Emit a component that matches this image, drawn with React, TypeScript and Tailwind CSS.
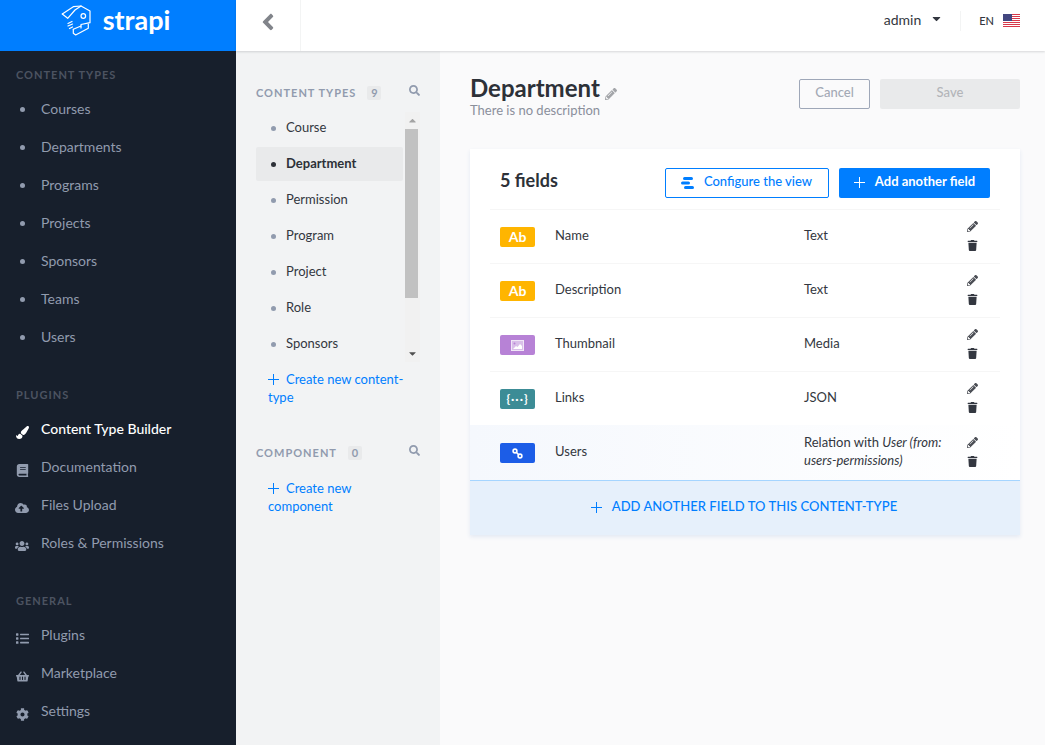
import type { ReactNode } from 'react';
import {
  FaAngleLeft,
  FaBook,
  FaCaretDown,
  FaCaretUp,
  FaCloudUploadAlt,
  FaCog,
  FaList,
  FaPaintBrush,
  FaPencilAlt,
  FaSearch,
  FaShoppingBasket,
  FaTrash,
  FaUsers,
} from 'react-icons/fa';

const contentTypes = ['Courses', 'Departments', 'Programs', 'Projects', 'Sponsors', 'Teams', 'Users'];
const subItems = ['Course', 'Department', 'Permission', 'Program', 'Project', 'Role', 'Sponsors'];

function Logo() {
  return (
    <svg width="32" height="33" viewBox="0 0 32 33" fill="none" stroke="white" strokeWidth="1.2" strokeLinejoin="round" strokeLinecap="round" className="mt-px">
      <path d="M2.3 10 L13.3 2.7 L21 2 L30 7 V18.7 L21 20.5 V24" />
      <path d="M2.3 10 L7.7 14.3 L15 6 L21 2" />
      <path d="M13.3 25.3 V29.3 L15.7 31 L28.3 24.3 V20" />
      <path d="M13.3 25.3 L21 22" />
      <circle cx="23.3" cy="12" r="2.3" />
      <path d="M8 19.5 L12 17.5 M8 22 L12.5 20 M9.5 24.5 L12.5 23" />
    </svg>
  );
}

function NavTitle({ children }: { children: ReactNode }) {
  return (
    <div className="mt-[31px] mb-[7px] pl-4 text-[11px] leading-4 font-bold tracking-[1px] text-[#4c5361] first:mt-4">
      {children}
    </div>
  );
}

function NavItem({ icon, label, active }: { icon: ReactNode; label: string; active?: boolean }) {
  return (
    <div className={`flex h-[38px] items-center text-sm ${active ? 'text-white' : 'text-[#919bae]'}`}>
      <span className="flex w-[41px] shrink-0 justify-center pt-[6px] pl-[3px] text-[13px]">{icon}</span>
      <span className={active ? 'font-medium' : ''}>{label}</span>
    </div>
  );
}

function Dot({ className }: { className: string }) {
  return <span className={`block h-[5px] w-[5px] rounded-full ${className}`} />;
}

function CountTitle({ label, count }: { label: string; count: number }) {
  return (
    <div className="flex h-4 items-center pr-5 pl-5 text-[11px] font-bold tracking-[1px] text-[#919bae]">
      <span>{label}</span>
      <span className="ml-[11px] flex h-[14px] w-[14px] items-center justify-center rounded-[2px] bg-[#e9eaeb] tracking-normal">
        {count}
      </span>
      <FaSearch className="ml-auto -mt-[5px] text-[11px]" />
    </div>
  );
}

function CreateLink({ children }: { children: string }) {
  return (
    <div className="w-[172px] pl-8 text-[13px] leading-[18px] text-[#007eff]">
      <svg width="11" height="11" viewBox="0 0 11 11" className="mr-[7px] mb-[2px] inline-block" stroke="#007eff" strokeWidth="1">
        <path d="M5.5 0 V11 M0 5.5 H11" />
      </svg>
      {children}
    </div>
  );
}

function Badge({ className, children }: { className: string; children: ReactNode }) {
  return (
    <span className={`mt-px flex h-5 w-[35px] shrink-0 items-center justify-center rounded-[2px] text-sm font-bold text-white ${className}`}>
      {children}
    </span>
  );
}

function FieldRow({ badge, name, type, last }: { badge: ReactNode; name: string; type: ReactNode; last?: boolean }) {
  return (
    <div className={`flex items-center ${last ? 'h-[55px] bg-gradient-to-r from-[#f5f8fd] to-white px-[30px]' : 'mx-5 h-[54px] border-t border-[#f6f6f6] px-[10px]'}`}>
      {badge}
      <span className="ml-5 w-[249px] shrink-0 pb-[2px] text-[13px] text-[#333740]">{name}</span>
      <span className="w-[150px] shrink-0 pb-1 text-[13px] leading-[18px] text-[#333740]">{type}</span>
      <span className="ml-[11px] flex w-[14px] flex-col items-center gap-2 pb-[2px] text-[11px] text-[#333740]">
        <FaPencilAlt className="text-[#4b4e55]" />
        <FaTrash />
      </span>
    </div>
  );
}

export default function App() {
  return (
    <div className="flex h-[745px] w-[1045px] overflow-hidden bg-[#fafafb] font-['Lato','Liberation_Sans',sans-serif]">
      <aside className="flex w-[236px] shrink-0 flex-col bg-[#171f2c]">
        <div className="flex h-[51px] shrink-0 items-center justify-center gap-[11px] bg-[#007eff] pr-[6px] pb-[11px]">
          <Logo />
          <span className="mb-[2px] text-[27px] leading-none font-bold text-white">strapi</span>
        </div>
        <div>
          <NavTitle>CONTENT TYPES</NavTitle>
          {contentTypes.map((name) => (
            <NavItem key={name} icon={<Dot className="mb-[5px] bg-[#919bae]" />} label={name} />
          ))}
          <NavTitle>PLUGINS</NavTitle>
          <NavItem active icon={<FaPaintBrush />} label="Content Type Builder" />
          <NavItem icon={<FaBook />} label="Documentation" />
          <NavItem icon={<FaCloudUploadAlt className="text-[14px]" />} label="Files Upload" />
          <NavItem icon={<FaUsers className="text-[14px]" />} label="Roles &amp; Permissions" />
          <NavTitle>GENERAL</NavTitle>
          <NavItem icon={<FaList />} label="Plugins" />
          <NavItem icon={<FaShoppingBasket />} label="Marketplace" />
          <NavItem icon={<FaCog />} label="Settings" />
        </div>
      </aside>

      <div className="flex min-w-0 flex-1 flex-col">
        <header className="z-10 flex h-[51px] shrink-0 items-center bg-white shadow-[0_1px_2px_rgba(40,42,49,0.16)]">
          <div className="flex h-full w-[65px] items-center justify-center border-r border-[#f3f4f4] pb-2">
            <FaAngleLeft className="text-[26px] text-[#81848a]" />
          </div>
          <div className="ml-auto flex items-center pb-[10px]">
            <span className="pb-[2px] text-sm text-[#333740]">admin</span>
            <FaCaretDown className="ml-[9px] -mt-[4px] text-[13px] text-[#333740]" />
            <span className="mr-[18px] ml-[17px] h-5 w-px bg-[#f3f4f4]" />
            <span className="pt-[2px] text-[11px] font-medium text-[#333740]">EN</span>
            <svg width="17" height="13" viewBox="0 0 17 13" className="mr-[25px] ml-[9px]">
              <rect width="17" height="13" fill="#fff" />
              <path d="M0 0.5H17M0 2.5H17M0 4.5H17M0 6.5H17M0 8.5H17M0 10.5H17M0 12.5H17" stroke="#d8384a" strokeWidth="1" />
              <rect width="9" height="7" fill="#42467f" />
            </svg>
          </div>
        </header>

        <div className="flex min-h-0 flex-1">
          <div className="w-[204px] shrink-0 bg-[#f2f3f4] pt-[34px]">
            <CountTitle label="CONTENT TYPES" count={9} />
            <div className="mt-[9px] flex h-[252px]">
              <div className="ml-5 w-[147px] shrink-0">
                {subItems.map((name) => {
                  const active = name === 'Department';
                  return (
                    <div key={name} className="flex h-9 items-center py-px">
                      <div className={`flex h-full w-full items-center rounded-[2px] pl-[15px] text-[13px] ${active ? 'bg-[#e9eaeb] font-bold text-[#2d3138]' : 'text-[#333740]'}`}>
                        <Dot className={`mr-[10px] ${active ? 'bg-[#2d3138]' : 'bg-[#919bae]'}`} />
                        {name}
                      </div>
                    </div>
                  );
                })}
              </div>
              <div className="mt-[2px] ml-[2px] flex h-[250px] w-[15px] flex-col bg-[#f1f1f1]">
                <div className="flex h-[17px] items-center justify-center">
                  <FaCaretUp className="text-[11px] text-[#a3a3a3]" />
                </div>
                <div className="h-[169px] w-[13px] bg-[#c1c1c1]" />
                <div className="mt-auto flex h-[17px] items-center justify-center">
                  <FaCaretDown className="text-[11px] text-[#505050]" />
                </div>
              </div>
            </div>
            <div className="mt-[8px]">
              <CreateLink>Create new content-type</CreateLink>
            </div>
            <div className="mt-[39px]">
              <CountTitle label="COMPONENT" count={0} />
            </div>
            <div className="mt-[18px]">
              <CreateLink>Create new component</CreateLink>
            </div>
          </div>

          <main className="min-w-0 flex-1 pt-[21px] pr-[25px] pl-[30px]">
            <div className="flex h-[77px] items-start justify-between">
              <div>
                <h1 className="flex h-8 items-center text-2xl font-bold text-[#2d3138]">
                  Department
                  <FaPencilAlt className="mt-3 ml-[5px] text-xs text-[#a3a5a9]" />
                </h1>
                <p className="-mt-[4px] text-[13px] leading-5 text-[#8a8f9b]">There is no description</p>
              </div>
              <div className="mt-[7px] flex gap-[10px]">
                <button className="h-[30px] w-[71px] rounded-[2px] border border-[#9ea7b8] pb-[3px] text-[13px] font-medium text-[#a3a9b5]">Cancel</button>
                <button className="h-[30px] w-[140px] rounded-[2px] bg-[#e9eaeb] pb-[3px] text-[13px] font-medium text-[#b3b5b9]">Save</button>
              </div>
            </div>

            <section className="w-[550px] bg-white shadow-[0_2px_4px_#e3e9f3]">
              <div className="flex h-[60px] items-center pr-[30px] pl-[30px]">
                <h2 className="pt-[2px] text-lg font-bold text-[#2d3138]">5 fields</h2>
                <button className="mt-2 ml-auto flex h-[30px] w-[164px] items-center justify-center gap-[10px] rounded-[2px] border border-[#007eff] pr-px pb-[2px] text-[13px] font-medium text-[#007eff]">
                  <svg width="13" height="12" viewBox="0 0 13 12" fill="#007eff" className="mt-[2px]">
                    <rect x="2" y="0" width="10" height="3" rx="1.5" />
                    <rect x="0" y="4.5" width="9" height="3" rx="1.5" />
                    <rect x="3" y="9" width="10" height="3" rx="1.5" />
                  </svg>
                  Configure the view
                </button>
                <button className="mt-2 ml-[10px] flex h-[30px] w-[151px] items-center justify-center gap-[10px] rounded-[2px] bg-[#007eff] pb-[2px] text-[13px] font-bold text-white">
                  <svg width="11" height="11" viewBox="0 0 11 11" stroke="white" strokeWidth="1">
                    <path d="M5.5 0 V11 M0 5.5 H11" />
                  </svg>
                  Add another field
                </button>
              </div>
              <FieldRow badge={<Badge className="bg-[#ffb500]">Ab</Badge>} name="Name" type="Text" />
              <FieldRow badge={<Badge className="bg-[#ffb500]">Ab</Badge>} name="Description" type="Text" />
              <FieldRow
                badge={
                  <Badge className="bg-[#b782d6]">
                    <svg width="13" height="11" viewBox="0 0 13 11">
                      <rect x="0.5" y="0.5" width="12" height="10" fill="#d9bfe9" stroke="#f0e6f7" />
                      <circle cx="3.5" cy="3.5" r="1" fill="#b782d6" />
                      <path d="M2 9 L5 6 L6.5 7 L9 4 L11 6 V9 Z" fill="#fff" />
                    </svg>
                  </Badge>
                }
                name="Thumbnail"
                type="Media"
              />
              <FieldRow
                badge={
                  <Badge className="bg-[#3c8c96]">
                    <span className="text-[12px] leading-none tracking-[1px]">{'{···}'}</span>
                  </Badge>
                }
                name="Links"
                type="JSON"
              />
              <FieldRow
                last
                badge={
                  <Badge className="bg-[#1c5de7]">
                    <svg width="11" height="11" viewBox="0 0 11 11" fill="none" stroke="white" strokeWidth="1.6">
                      <circle cx="3" cy="3" r="1.9" />
                      <circle cx="8" cy="8" r="1.9" />
                      <path d="M4.5 4.5 L6.5 6.5" />
                    </svg>
                  </Badge>
                }
                name="Users"
                type={
                  <>
                    Relation with <i>User (from: users-permissions)</i>
                  </>
                }
              />
              <div className="flex h-[55px] items-center justify-center gap-[10px] border-t border-[#a5d5ff] bg-[#e6f0fb] pr-[2px] pb-[2px] text-[13px] font-medium tracking-[0.05px] text-[#007eff]">
                <svg width="11" height="11" viewBox="0 0 11 11" stroke="#007eff" strokeWidth="1">
                  <path d="M5.5 0 V11 M0 5.5 H11" />
                </svg>
                ADD ANOTHER FIELD TO THIS CONTENT-TYPE
              </div>
            </section>
          </main>
        </div>
      </div>
    </div>
  );
}
